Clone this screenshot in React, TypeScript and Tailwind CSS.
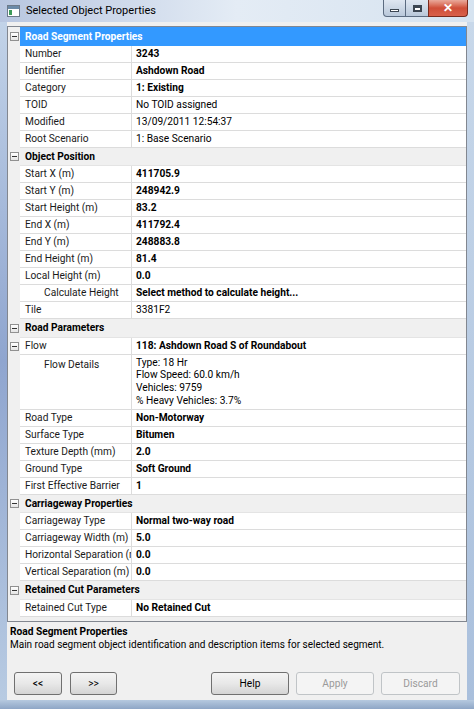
import React from 'react';

type Item =
  | { kind: 'header'; label: string; selected?: boolean }
  | {
      kind: 'row';
      name: string;
      value: string | string[];
      bold?: boolean;
      indent?: boolean;
      expander?: boolean;
    };

const items: Item[] = [
  { kind: 'header', label: 'Road Segment Properties', selected: true },
  { kind: 'row', name: 'Number', value: '3243', bold: true },
  { kind: 'row', name: 'Identifier', value: 'Ashdown Road', bold: true },
  { kind: 'row', name: 'Category', value: '1: Existing', bold: true },
  { kind: 'row', name: 'TOID', value: 'No TOID assigned' },
  { kind: 'row', name: 'Modified', value: '13/09/2011 12:54:37' },
  { kind: 'row', name: 'Root Scenario', value: '1: Base Scenario' },
  { kind: 'header', label: 'Object Position' },
  { kind: 'row', name: 'Start X (m)', value: '411705.9', bold: true },
  { kind: 'row', name: 'Start Y (m)', value: '248942.9', bold: true },
  { kind: 'row', name: 'Start Height (m)', value: '83.2', bold: true },
  { kind: 'row', name: 'End X (m)', value: '411792.4', bold: true },
  { kind: 'row', name: 'End Y (m)', value: '248883.8', bold: true },
  { kind: 'row', name: 'End Height (m)', value: '81.4', bold: true },
  { kind: 'row', name: 'Local Height (m)', value: '0.0', bold: true },
  { kind: 'row', name: 'Calculate Height', value: 'Select method to calculate height...', bold: true, indent: true },
  { kind: 'row', name: 'Tile', value: '3381F2' },
  { kind: 'header', label: 'Road Parameters' },
  { kind: 'row', name: 'Flow', value: '118: Ashdown Road S of Roundabout', bold: true, expander: true },
  {
    kind: 'row',
    name: 'Flow Details',
    indent: true,
    value: ['Type: 18 Hr', 'Flow Speed: 60.0 km/h', 'Vehicles: 9759', '% Heavy Vehicles: 3.7%'],
  },
  { kind: 'row', name: 'Road Type', value: 'Non-Motorway', bold: true },
  { kind: 'row', name: 'Surface Type', value: 'Bitumen', bold: true },
  { kind: 'row', name: 'Texture Depth (mm)', value: '2.0', bold: true },
  { kind: 'row', name: 'Ground Type', value: 'Soft Ground', bold: true },
  { kind: 'row', name: 'First Effective Barrier', value: '1', bold: true },
  { kind: 'header', label: 'Carriageway Properties' },
  { kind: 'row', name: 'Carriageway Type', value: 'Normal two-way road', bold: true },
  { kind: 'row', name: 'Carriageway Width (m)', value: '5.0', bold: true },
  { kind: 'row', name: 'Horizontal Separation (m)', value: '0.0', bold: true },
  { kind: 'row', name: 'Vertical Separation (m)', value: '0.0', bold: true },
  { kind: 'header', label: 'Retained Cut Parameters' },
  { kind: 'row', name: 'Retained Cut Type', value: 'No Retained Cut', bold: true },
];

const Expander = () => (
  <span className="flex h-[9px] w-[9px] items-center justify-center border border-[#919191] bg-gradient-to-b from-white to-[#e4e4e4]">
    <span className="h-px w-[5px] bg-[#333]" />
  </span>
);

const GridRow: React.FC<{ item: Item }> = ({ item }) => {
  if (item.kind === 'header') {
    return (
      <div className="flex h-[18.5px]">
        <div className="flex w-[12px] shrink-0 items-center justify-center">
          <Expander />
        </div>
        <div
          className={
            item.selected
              ? 'flex flex-1 items-center bg-[#3399ff] pl-[5px] font-bold text-white'
              : 'flex flex-1 items-center border-b border-[#e4e4e4] pl-[5px] font-bold text-black'
          }
        >
          {item.label}
        </div>
      </div>
    );
  }
  const multi = Array.isArray(item.value);
  return (
    <div className={multi ? 'flex h-[55px]' : 'flex h-[17px]'}>
      <div className="flex w-[12px] shrink-0 items-center justify-center">
        {item.expander && <Expander />}
      </div>
      <div
        className={
          (multi ? 'items-start pt-[2px] ' : 'items-center ') +
          'flex w-[112px] shrink-0 overflow-hidden whitespace-nowrap border-b border-r border-[#dcdcdc] bg-white text-[#1a1a1a] ' +
          (item.indent ? 'pl-[24px]' : 'pl-[5px]')
        }
      >
        {item.name}
      </div>
      <div
        className={
          (multi ? 'flex-col justify-start pt-[2px] leading-[12.8px] ' : 'items-center ') +
          'flex flex-1 overflow-hidden whitespace-nowrap border-b border-[#dcdcdc] bg-white pl-[4px] text-black ' +
          (item.bold ? 'font-bold' : '')
        }
      >
        {multi ? (item.value as string[]).map((l) => <div key={l}>{l}</div>) : item.value}
      </div>
    </div>
  );
};

const Btn: React.FC<{ label: string; w: string; disabled?: boolean }> = ({ label, w, disabled }) => (
  <div
    className={
      w +
      ' flex h-[23px] items-center justify-center rounded-[3px] border ' +
      (disabled
        ? 'border-[#c0c4c7] bg-[#f4f4f4] text-[#9a9a9a]'
        : 'border-[#707070] bg-gradient-to-b from-[#f4f4f4] via-[#e8e8e8] to-[#d4d4d4] text-black')
    }
  >
    {label}
  </div>
);

export default function App() {
  return (
    <div className="relative h-[709px] w-[474px] overflow-hidden bg-gradient-to-b from-[#d9e6f3] to-[#b9cde3] font-['Roboto',sans-serif] text-[10.2px]">
      {/* title bar */}
      <div className="flex h-[22px] items-center bg-gradient-to-r from-[#b8c6e0] via-[#e4ecf5] to-[#d6e3f0]">
        <div className="ml-[7px] flex h-[12px] w-[13px] flex-col border border-[#6d7a8a] bg-white">
          <div className="h-[3px] bg-[#6b8aa8]" />
          <div className="ml-[1px] mt-[1px] h-[5px] w-[3px] bg-[#3d9b5a]" />
        </div>
        <span className="ml-[6px] text-[11px] text-black">Selected Object Properties</span>
        <div className="ml-auto mr-[6px] flex h-[17px] self-start">
          <div className="flex w-[23px] items-end justify-center rounded-bl-[4px] border border-t-0 border-[#5b6b80] bg-gradient-to-b from-[#dfe7f1] to-[#b9c8da] pb-[4px]">
            <div className="h-[3px] w-[9px] border border-[#3c4652] bg-white" />
          </div>
          <div className="flex w-[22px] items-center justify-center border-b border-[#5b6b80] bg-gradient-to-b from-[#dfe7f1] to-[#b9c8da]">
            <div className="h-[7px] w-[9px] border-[2px] border-t-[3px] border-[#3c4652] bg-white" />
          </div>
          <div className="flex w-[40px] items-center justify-center rounded-br-[4px] border border-t-0 border-[#7a2a1c] bg-gradient-to-b from-[#e9a99b] via-[#cf4e38] to-[#d9604a] text-[12px] font-bold text-white">
            ✕
          </div>
        </div>
      </div>

      <div className="flex h-[678px]">
        <div className="w-[7px] bg-gradient-to-b from-[#c2d3e8] via-[#8fa5cf] to-[#b8cbe2]" />
        <div className="flex w-[460px] flex-col bg-[#f0f0f0]">
          {/* property grid */}
          <div className="mt-[4px] h-[596px] border border-[#828790] bg-[#f0f0f0]">
            {items.map((it, i) => (
              <GridRow key={i} item={it} />
            ))}
          </div>

          {/* description */}
          <div className="h-[40px] px-[3px] pt-[4px] leading-[12.5px] text-black">
            <div className="font-bold">Road Segment Properties</div>
            <div className="text-[10px]">Main road segment object identification and description items for selected segment.</div>
          </div>

          {/* buttons */}
          <div className="mt-[10px] flex px-[7px]">
            <Btn label="<<" w="w-[48px]" />
            <div className="ml-[8px]">
              <Btn label=">>" w="w-[47px]" />
            </div>
            <div className="ml-auto flex gap-[7px]">
              <Btn label="Help" w="w-[78px]" />
              <Btn label="Apply" w="w-[78px]" disabled />
              <Btn label="Discard" w="w-[79px]" disabled />
            </div>
          </div>
        </div>
        <div className="w-[7px] bg-gradient-to-b from-[#c8d8ea] to-[#a9bfdc]" />
      </div>
      <div className="h-[9px] bg-gradient-to-b from-[#b6c9df] to-[#8ea6c6]" />
    </div>
  );
}
